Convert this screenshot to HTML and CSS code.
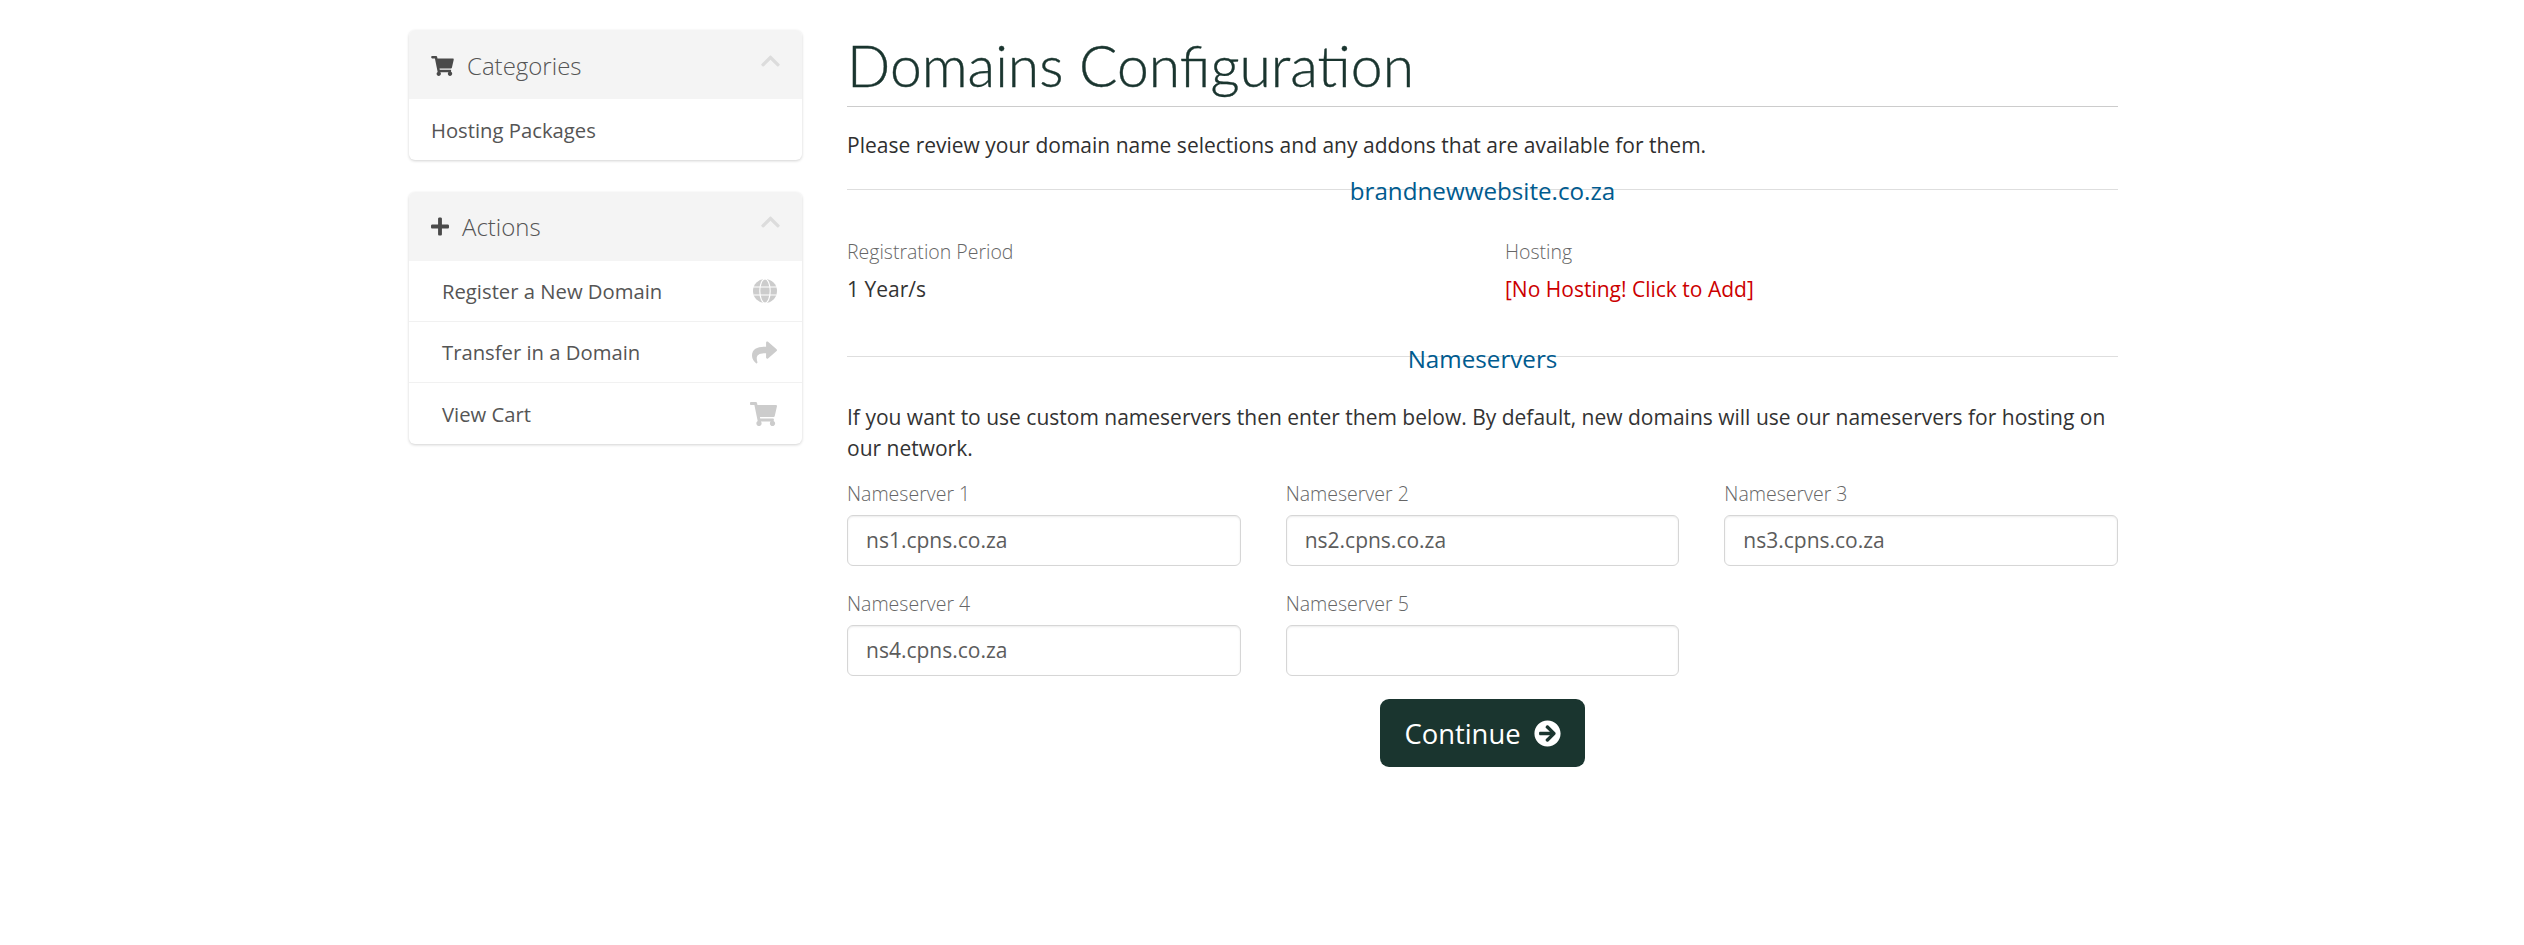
FILE: index.html
```html
<!DOCTYPE html>
<html lang="en">
<head>
<meta charset="utf-8">
<title>Domains Configuration</title>
<link rel="stylesheet" href="styles.css">
</head>
<body>
<div class="layout">
  <aside class="sidebar">
    <section class="panel">
      <header class="panel-head">
        <svg class="head-icon cart" viewBox="0 0 576 512"><path d="M528.12 301.319l47.273-208C578.806 78.301 567.391 64 551.99 64H159.208l-9.166-44.81C147.758 8.021 137.93 0 126.529 0H24C10.745 0 0 10.745 0 24v16c0 13.255 10.745 24 24 24h69.883l70.248 343.435C147.325 417.1 136 435.222 136 456c0 30.928 25.072 56 56 56s56-25.072 56-56c0-15.674-6.447-29.835-16.824-40h209.647C430.447 426.165 424 440.326 424 456c0 30.928 25.072 56 56 56s56-25.072 56-56c0-22.172-12.888-41.332-31.579-50.405l5.517-24.276c3.413-15.018-8.002-29.319-23.403-29.319H218.117l-6.545-32h293.145c11.206 0 20.92-7.754 23.403-18.681z"/></svg>
        <h3 class="panel-title">Categories</h3>
        <svg class="chevron" viewBox="0 0 448 512"><path d="M240.971 130.524l194.343 194.343c9.373 9.373 9.373 24.569 0 33.941l-22.667 22.667c-9.357 9.357-24.522 9.375-33.901.04L224 227.495 69.255 381.516c-9.379 9.335-24.544 9.317-33.901-.04l-22.667-22.667c-9.373-9.373-9.373-24.569 0-33.941L207.03 130.525c9.372-9.373 24.568-9.373 33.941-.001z"/></svg>
      </header>
      <a class="cat-link">Hosting Packages</a>
    </section>
    <section class="panel">
      <header class="panel-head actions-head">
        <svg class="head-icon plus" viewBox="0 0 448 512"><path d="M416 208H272V64c0-17.67-14.33-32-32-32h-32c-17.67 0-32 14.33-32 32v144H32c-17.67 0-32 14.33-32 32v32c0 17.67 14.33 32 32 32h144v144c0 17.67 14.33 32 32 32h32c17.67 0 32-14.33 32-32V304h144c17.67 0 32-14.33 32-32v-32c0-17.67-14.33-32-32-32z"/></svg>
        <h3 class="panel-title">Actions</h3>
        <svg class="chevron" viewBox="0 0 448 512"><path d="M240.971 130.524l194.343 194.343c9.373 9.373 9.373 24.569 0 33.941l-22.667 22.667c-9.357 9.357-24.522 9.375-33.901.04L224 227.495 69.255 381.516c-9.379 9.335-24.544 9.317-33.901-.04l-22.667-22.667c-9.373-9.373-9.373-24.569 0-33.941L207.03 130.525c9.372-9.373 24.568-9.373 33.941-.001z"/></svg>
      </header>
      <a class="action-link"><span>Register a New Domain</span>
        <svg class="action-icon globe" viewBox="0 0 24 24"><circle class="globe-disc" cx="12" cy="12" r="12"/><g class="globe-lines"><ellipse cx="12" cy="12" rx="5.2" ry="12"/><path d="M0.5 8h23M0.5 16h23"/></g></svg></a>
      <a class="action-link"><span>Transfer in a Domain</span>
        <svg class="action-icon share" viewBox="0 0 512 512"><path d="M503.691 189.836L327.687 37.851C312.281 24.546 288 35.347 288 56.015v80.053C127.371 137.907 0 170.1 0 322.326c0 61.441 39.581 122.309 83.333 154.132 13.653 9.931 33.111-2.533 28.077-18.631C66.066 312.814 132.917 274.316 288 272.085V360c0 20.7 24.3 31.453 39.687 18.164l176.004-152c11.071-9.562 11.086-26.753 0-36.328z"/></svg></a>
      <a class="action-link"><span>View Cart</span>
        <svg class="action-icon wide" viewBox="0 0 576 512"><path d="M528.12 301.319l47.273-208C578.806 78.301 567.391 64 551.99 64H159.208l-9.166-44.81C147.758 8.021 137.93 0 126.529 0H24C10.745 0 0 10.745 0 24v16c0 13.255 10.745 24 24 24h69.883l70.248 343.435C147.325 417.1 136 435.222 136 456c0 30.928 25.072 56 56 56s56-25.072 56-56c0-15.674-6.447-29.835-16.824-40h209.647C430.447 426.165 424 440.326 424 456c0 30.928 25.072 56 56 56s56-25.072 56-56c0-22.172-12.888-41.332-31.579-50.405l5.517-24.276c3.413-15.018-8.002-29.319-23.403-29.319H218.117l-6.545-32h293.145c11.206 0 20.92-7.754 23.403-18.681z"/></svg></a>
    </section>
  </aside>
  <main class="content">
    <h1 class="page-title">Domains Configuration</h1>
    <p class="intro">Please review your domain name selections and any addons that are available for them.</p>
    <div class="divider first"><span>brandnewwebsite.co.za</span></div>
    <div class="two-col">
      <div><div class="label">Registration Period</div><div class="value">1 Year/s</div></div>
      <div><div class="label">Hosting</div><div class="value"><a class="no-hosting">[No Hosting! Click to Add]</a></div></div>
    </div>
    <div class="divider second"><span>Nameservers</span></div>
    <p class="ns-intro">If you want to use custom nameservers then enter them below. By default, new domains will use our nameservers for hosting on our network.</p>
    <div class="ns-grid">
      <label class="field"><span class="label">Nameserver 1</span><input class="input" type="text" value="ns1.cpns.co.za"></label>
      <label class="field"><span class="label">Nameserver 2</span><input class="input" type="text" value="ns2.cpns.co.za"></label>
      <label class="field"><span class="label">Nameserver 3</span><input class="input" type="text" value="ns3.cpns.co.za"></label>
      <label class="field"><span class="label">Nameserver 4</span><input class="input" type="text" value="ns4.cpns.co.za"></label>
      <label class="field"><span class="label">Nameserver 5</span><input class="input" type="text" value=""></label>
    </div>
    <div class="actions">
      <button class="continue" type="button">Continue
        <svg class="continue-icon" viewBox="0 0 512 512"><path d="M256 8c137 0 248 111 248 248S393 504 256 504 8 393 8 256 119 8 256 8zm-28.9 143.6l75.5 72.4H120c-13.3 0-24 10.7-24 24v16c0 13.3 10.7 24 24 24h182.6l-75.5 72.4c-9.7 9.3-9.9 24.8-.4 34.3l11 10.9c9.4 9.4 24.6 9.4 33.9 0L404.3 273c9.4-9.4 9.4-24.6 0-33.9L271.6 106.3c-9.4-9.4-24.6-9.4-33.9 0l-11 10.9c-9.5 9.6-9.3 25.1.4 34.4z"/></svg>
      </button>
    </div>
  </main>
</div>
</body>
</html>
```

FILE: styles.css
```css
* { box-sizing: border-box; }
html, body { margin: 0; background: #fff; }
body {
  font-family: "Open Sans", sans-serif;
  font-size: 21px;
  color: #333;
  height: 945px;
  overflow: hidden;
}
.layout {
  display: grid;
  grid-template-columns: 393px 1271px;
  column-gap: 45px;
  margin-left: 409px;
  width: 1709px;
  padding-top: 30px;
}
.sidebar { display: flex; flex-direction: column; gap: 32px; }
.panel {
  background: #fff;
  border-radius: 6px;
  box-shadow: 0 1px 3px rgba(0,0,0,.18);
  overflow: hidden;
}
.panel-head {
  display: flex;
  align-items: center;
  height: 69px;
  padding: 2px 22px 0;
  background: #f4f4f4;
  color: #555;
}
.panel-head.actions-head { padding-top: 0; }
.head-icon { fill: #4a4a4a; flex: none; }
.head-icon.cart { width: 23px; height: 20px; margin-right: 13px; }
.head-icon.plus { width: 18px; height: 21px; margin-right: 13px; }
.panel-title { margin: 0; font-size: 24px; font-weight: 300; color: #555; }
.chevron { width: 19px; height: 22px; fill: #dcdcdc; margin-left: auto; position: relative; top: -5px; flex: none; }
.cat-link { display: block; padding: 17px 22px 0; height: 61px; font-size: 20.25px; color: #555; }
.action-link {
  display: flex;
  align-items: center;
  justify-content: space-between;
  height: 61px;
  padding: 0 25px 0 33px;
  font-size: 20.25px;
  color: #555;
  border-bottom: 1px solid #f1f1f1;
}
.action-link:last-child { border-bottom: 0; }
.action-icon { width: 24px; height: 24px; fill: #ccc; flex: none; }
.action-icon.share { width: 25px; height: 25px; }
.action-icon.wide { width: 27px; height: 24px; }
.globe-disc { fill: #ccc; }
.globe-lines { fill: none; stroke: #fff; stroke-width: 1.1; }
.page-title {
  margin: 0;
  font-family: Lato, sans-serif;
  font-weight: 300;
  font-size: 57px;
  line-height: 71px;
  height: 77px;
  color: #1a352f;
  -webkit-text-stroke: 0.4px #1a352f;
  border-bottom: 1px solid #ccc;
}
.intro { margin: 24px 0 0; line-height: 28px; color: #2f2f2f; }
.divider {
  position: relative;
  text-align: center;
  height: 30px;
  color: #005b8f;
  font-size: 24.2px;
  line-height: 30px;
}
.divider::before {
  content: "";
  position: absolute;
  left: 0; right: 0; top: 13px;
  border-top: 1px solid #dedede;
}
.divider span { position: relative; }
.divider.first { margin-top: 17px; }
.divider.second { margin-top: 41px; }
.divider.second::before { top: 12px; }
.two-col { display: grid; grid-template-columns: 658px 1fr; margin-top: 32px; }
.label { font-weight: 300; color: #666; font-size: 19.5px; line-height: 28px; }
.value { margin-top: 9px; line-height: 28px; color: #333; }
.no-hosting { color: #cc0000; }
.ns-intro { margin: 28px 0 0; line-height: 30.5px; color: #333; }
.ns-grid {
  display: grid;
  grid-template-columns: repeat(3, 1fr);
  column-gap: 45px;
  row-gap: 24px;
  margin-top: 17px;
}
.field { display: flex; flex-direction: column; gap: 7px; }
.input {
  height: 51px;
  width: 100%;
  padding: 0 18px 1px;
  border: 1px solid #d6d6d6;
  border-radius: 6px;
  box-shadow: inset 0 1px 2px rgba(0,0,0,.08);
  font-family: "Open Sans", sans-serif;
  font-size: 21px;
  color: #5c5c5c;
  background: #fff;
}
.actions { display: flex; justify-content: center; margin-top: 23px; }
.continue {
  display: flex;
  align-items: center;
  gap: 13px;
  height: 68px;
  padding: 0 24px;
  border: 0;
  border-radius: 9px;
  background: #1a352f;
  color: #fff;
  font-family: "Open Sans", sans-serif;
  font-size: 27.4px;
}
.continue-icon { width: 27px; height: 27px; fill: #fff; }
```
